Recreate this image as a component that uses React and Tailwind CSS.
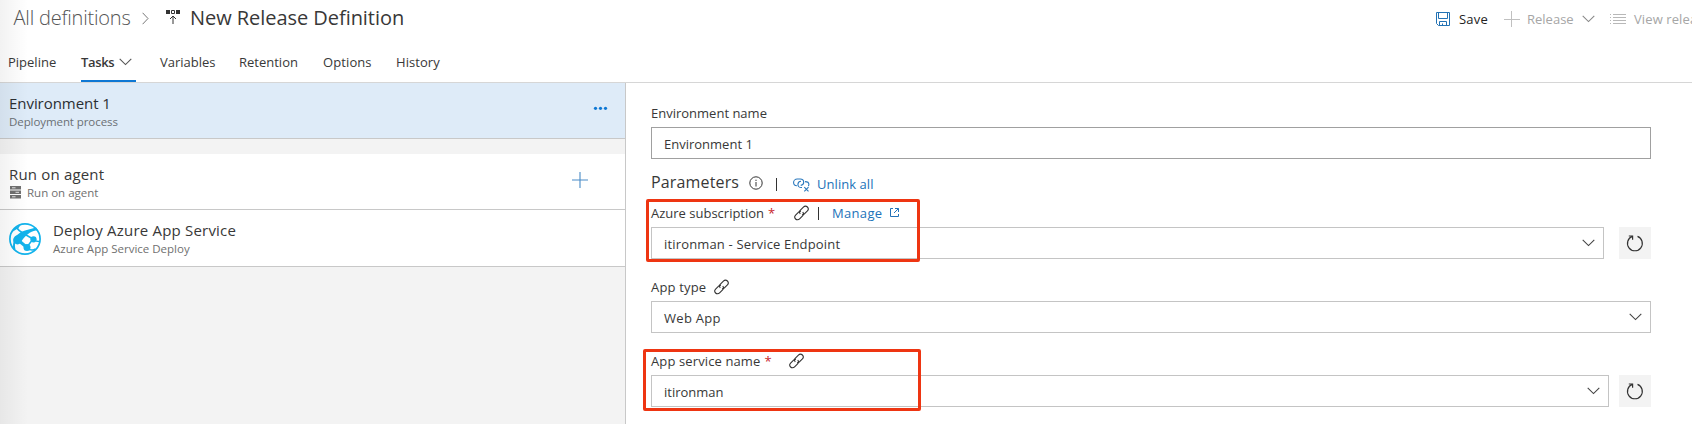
import React from "react";

function Chevron({ className = "" }) {
  return (
    <svg className={"shrink-0 " + className} width="13" height="8" viewBox="0 0 13 8" fill="none" stroke="currentColor" strokeWidth="1.1">
      <path d="M.7 .9 6.5 6.6 12.3 .9" />
    </svg>
  );
}

function LinkIcon({ className = "" }) {
  return (
    <svg className={"shrink-0 text-[#333] " + className} width="16" height="16" viewBox="0 0 16 16" fill="none" stroke="currentColor" strokeWidth="1.1">
      <path d="M6.300 8.800C5.300 7.700 5.400 6.200 6.400 5.200L9.400 2.100C10.600.9 12.300.9 13.400 2S14.500 4.700 13.400 5.900L10.400 8.900C9.700 9.600 8.800 9.800 8 9.600" />
      <path d="M8.700 7.200C9.700 8.300 9.600 9.800 8.600 10.800L5.600 13.900C4.400 15.100 2.700 15.100 1.600 14S.5 11.300 1.600 10.100L4.600 7.100C5.300 6.400 6.200 6.200 7 6.400" />
    </svg>
  );
}

function UnlinkIcon({ className = "" }) {
  return (
    <svg className={"shrink-0 text-[#2a78bd] " + className} width="17" height="14" viewBox="0 0 17 14" fill="none" stroke="currentColor" strokeWidth="1.1">
      <path d="M3.900 7.800C2 7.600.6 6.200.6 4.400S2.200 1 4.200 1H7.200C9.200 1 10.700 2.400 10.700 4.200 10.700 5.900 9.400 7.200 7.700 7.400" />
      <path d="M9 9.500H8.200C6.300 9.500 4.900 8.100 4.900 6.400S6.400 3.400 8 3.300" />
      <path d="M12 3.600C14.300 3.600 15.900 4.900 15.900 6.500 15.900 7.100 15.700 7.600 15.300 8" />
      <path d="M11.300 9.200 15.500 13.400M15.500 9.200 11.300 13.400" />
    </svg>
  );
}

function SaveIcon() {
  return (
    <svg className="mt-[12px] shrink-0 text-[#2272b4]" width="15" height="15" viewBox="0 0 15 15" fill="none" stroke="currentColor" strokeWidth="1">
      <path d="M.5.500H13.500V13.500H2.500L.5 11.500Z" />
      <path d="M2.500.500V6.500H11.500V.500" />
      <path d="M3.500 13.500V9.500H10.500V13.500M6.500 13.500V11.500" />
    </svg>
  );
}

function ReleaseIcon() {
  return (
    <svg className="mt-[10px] shrink-0" width="15" height="15" viewBox="0 0 15 15" fill="none" stroke="#333">
      <path d="M0 0H4V4H0ZM10 0H14V4H10Z" fill="#333" stroke="none" />
      <path d="M5.500.500H8.500V3.500H5.500Z" strokeWidth="1" />
      <path d="M7 6V14M4 9 7 6 10 9" strokeWidth="1" />
    </svg>
  );
}

function ServerIcon() {
  return (
    <svg className="mt-[2px] shrink-0" width="11" height="13" viewBox="0 0 11 13">
      <path d="M0 0H11V3.500H0ZM0 4.500H11V8H0ZM0 9H11V12.500H0Z" fill="#707070" />
      <path d="M2 1.800H5.500M5.500 6.300H9M2 10.800H5.500" stroke="#e4e4e4" strokeWidth="1" />
    </svg>
  );
}

function GlobeIcon() {
  return (
    <svg className="mt-[13px] shrink-0" width="32" height="32" viewBox="0 0 32 32" fill="none" stroke="#12b3ec">
      <circle cx="16" cy="16" r="15.100" strokeWidth="1.700" />
      <path d="M7.500 4.500C9 7 11.500 8.800 14.500 10.500L24 16" strokeWidth="1.600" />
      <path d="M6.500 17C4.800 20 4.500 23 5.500 26.500" strokeWidth="2" />
      <path d="M9 17 18 24.500" strokeWidth="3" />
      <path d="M24 16 18 24M24.500 16.500C27 18.300 29 18.800 31 18.500M18 25C21 27.300 24 27.500 26.500 26" strokeWidth="1.500" />
      <g fill="#12b3ec" stroke="none">
        <circle cx="8.500" cy="17" r="4.400" />
        <circle cx="18" cy="24.500" r="3.500" />
        <circle cx="24.500" cy="16.300" r="3.100" />
        <path d="M5.500 14 12 9 16 7.500 27 4.500 29 7.500C23 7.500 18.500 10 12.500 18Z" />
        <path d="M1 12C3 7 7 3.500 12 1.500L9.500 5 4 8.500Z" />
      </g>
    </svg>
  );
}

function Refresh() {
  return (
    <button className="flex h-8 w-8 shrink-0 items-center justify-center bg-[#f3f3f3]">
      <svg width="18" height="18" viewBox="0 0 18 18" fill="none" stroke="#333" strokeWidth="1.200">
        <path d="M11.500 2.400A7.400 7.400 0 1 1 6.300 2.400" />
        <path d="M2.800 2H6.600V5.800" />
      </svg>
    </button>
  );
}

function Select({ children, className = "" }) {
  return (
    <div className={"flex h-8 items-center justify-between border border-[#c4c4c4] bg-white pl-3 " + className}>
      <span className="mt-[2px] leading-5">{children}</span>
      <Chevron className="mr-[8px] text-[#444]" />
    </div>
  );
}

export default function App() {
  return (
    <div className="relative flex h-[424px] w-[1692px] flex-col overflow-hidden bg-white font-['Open_Sans',sans-serif] text-[13px] text-[#383838] whitespace-nowrap">
      <header className="flex h-[45px] shrink-0">
        <div className="flex w-[1436px] shrink-0 pl-[13.500px]">
          <span className="mt-[4px] w-[128px] text-[20px] leading-7 font-light tracking-[-0.200px] text-[#555]">All definitions</span>
          <svg className="mt-[12px] w-[24px] shrink-0" height="13" viewBox="0 0 24 13" fill="none" stroke="#777" strokeWidth="1">
            <path d="M.6.800 6 6.500.6 12.200" />
          </svg>
          <ReleaseIcon />
          <h1 className="mt-[4px] ml-[9.500px] text-[20px] leading-7 tracking-[-0.050px]">New Release Definition</h1>
        </div>
        <div className="flex shrink-0 leading-5">
          <SaveIcon />
          <span className="mt-[9px] ml-[8px] w-[45px] tracking-[0.200px] text-[#222]">Save</span>
          <svg className="mt-[11px] shrink-0" width="16" height="16" viewBox="0 0 16 16" stroke="#c0c0c0" strokeWidth="1">
            <path d="M0 8.500H16M7.500 0V16" />
          </svg>
          <span className="mt-[9px] ml-[7px] w-[55px] text-[#a6a6a6]">Release</span>
          <Chevron className="mt-[15px] text-[#888]" />
          <svg className="mt-[14px] ml-[15px] shrink-0" width="16" height="11" viewBox="0 0 16 11" stroke="#b8b8b8" strokeWidth="1">
            <path d="M0 .5H1M3 .5H16M0 3.500H1M3 3.500H16M0 6.500H1M3 6.500H16M0 9.500H1M3 9.500H16" />
          </svg>
          <span className="mt-[9px] ml-[8px] tracking-[0.100px] text-[#a6a6a6]">View releases</span>
        </div>
      </header>

      <nav className="flex h-[38px] shrink-0 border-b border-[#d6d6d6] pl-[8px] leading-5">
        <span className="mt-[7px] w-[73px]">Pipeline</span>
        <span className="flex w-[55px] border-b-2 border-[#0f78d4]">
          <span className="mt-[7px] w-[38px] font-semibold tracking-[-0.350px]">Tasks</span>
          <Chevron className="mt-[13px] text-[#555]" />
        </span>
        <span className="mt-[7px] ml-6 w-[79px]">Variables</span>
        <span className="mt-[7px] w-[84px]">Retention</span>
        <span className="mt-[7px] w-[73px] tracking-[0.100px]">Options</span>
        <span className="mt-[7px] tracking-[0.050px]">History</span>
      </nav>

      <div className="flex min-h-0 flex-1">
        <aside className="flex w-[626px] shrink-0 flex-col border-r border-[#c8c8c8] bg-[#f3f3f3]">
          <div className="flex h-[56px] shrink-0 justify-between border-b border-[#c8c8c8] bg-[#deebf8] pl-[9px]">
            <div className="flex flex-col pt-[10px]">
              <span className="text-[15px] leading-5 tracking-[-0.050px] text-[#2b2f33]">Environment 1</span>
              <span className="mt-px text-[11.500px] leading-4 tracking-[-0.080px] text-[#6b7075]">Deployment process</span>
            </div>
            <svg className="mt-[23px] mr-[17px]" width="15" height="5" viewBox="0 0 15 5" fill="#0f78d4">
              <circle cx="2.500" cy="2.300" r="1.600" />
              <circle cx="7.500" cy="2.300" r="1.600" />
              <circle cx="12.500" cy="2.300" r="1.600" />
            </svg>
          </div>
          <div className="mt-[15px] flex h-[56px] shrink-0 justify-between border-b border-[#c8c8c8] bg-white pl-[9px]">
            <div className="flex flex-col pt-[10px]">
              <span className="text-[15px] leading-5 tracking-[0.180px]">Run on agent</span>
              <span className="ml-px flex h-4 gap-[6px]">
                <ServerIcon />
                <span className="mt-px text-[11.500px] leading-4 text-[#707070]">Run on agent</span>
              </span>
            </div>
            <svg className="mt-[18px] mr-[37px]" width="16" height="16" viewBox="0 0 16 16" stroke="#4a8cc7" strokeWidth="1.100">
              <path d="M0 8H16M8 0V16" />
            </svg>
          </div>
          <div className="flex h-[57px] shrink-0 border-b border-[#c8c8c8] bg-white pl-[9px]">
            <GlobeIcon />
            <div className="ml-[12px] flex flex-col pt-[10px]">
              <span className="text-[15px] leading-5 tracking-[0.200px]">Deploy Azure App Service</span>
              <span className="mt-px text-[11.500px] leading-4 text-[#707070]">Azure App Service Deploy</span>
            </div>
          </div>
        </aside>

        <main className="flex min-w-0 flex-1 flex-col pl-[25px]">
          <label className="mt-[20px] h-6 leading-5">Environment name</label>
          <div className="flex h-8 w-[1000px] shrink-0 items-center border border-[#a0a0a0] pl-3">
            <span className="mt-[2px] leading-5">Environment 1</span>
          </div>

          <div className="flex h-[44px] shrink-0">
            <h2 className="mt-[11px] w-[98px] text-[16px] leading-6 tracking-[0.150px]">Parameters</h2>
            <svg className="mt-[17px] shrink-0" width="14" height="14" viewBox="0 0 14 14" fill="none" stroke="#333" strokeWidth="1">
              <circle cx="7" cy="7" r="6.200" />
              <path d="M7 6V10.500M7 3.700V5" />
            </svg>
            <span className="mt-[19px] ml-[13px] h-[13px] w-px bg-[#333]" />
            <UnlinkIcon className="mt-[19px] ml-[16px]" />
            <a className="mt-[15px] ml-[7px] leading-5 tracking-[0.050px] text-[#2272b9]">Unlink all</a>
          </div>

          <div className="flex h-[24px] shrink-0 leading-5">
            <label>Azure subscription</label>
            <span className="ml-[4px] w-[26px] text-[#c8242b]">*</span>
            <LinkIcon className="mt-[2px]" />
            <span className="mt-[4px] ml-[8px] h-[13px] w-px bg-[#333]" />
            <a className="ml-[13px] w-[58px] tracking-[0.300px] text-[#2272b9]">Manage</a>
            <svg className="mt-[5px]" width="10" height="10" viewBox="0 0 10 10" fill="none" stroke="#2272b9" strokeWidth="1">
              <path d="M3 .500H.5V8.500H8.500V6M5 .500H8.500V4M8.500.500 4 5" />
            </svg>
          </div>
          <div className="flex h-8 shrink-0 gap-[15px]">
            <Select className="w-[953px] tracking-[0.160px]">itironman - Service Endpoint</Select>
            <Refresh />
          </div>

          <div className="mt-[18px] flex h-[24px] shrink-0 leading-5">
            <label className="mr-[8px] tracking-[0.180px]">App type</label>
            <LinkIcon className="mt-[2px]" />
          </div>
          <Select className="w-[1000px] shrink-0 tracking-[0.300px]">Web App</Select>

          <div className="mt-[18px] flex h-[24px] shrink-0 leading-5">
            <label className="tracking-[0.120px]">App service name</label>
            <span className="ml-[4px] w-[25px] text-[#c8242b]">*</span>
            <LinkIcon className="mt-[2px]" />
          </div>
          <div className="flex h-8 shrink-0 gap-[10px]">
            <Select className="w-[958px]">itironman</Select>
            <Refresh />
          </div>
        </main>
      </div>

      <div className="absolute top-0 left-0 h-full w-[28px] bg-linear-to-r from-black/5 to-transparent" />
      <div className="absolute top-[199px] left-[646px] h-[63px] w-[274px] rounded-[2px] border-3 border-[#ee3512]" />
      <div className="absolute top-[349px] left-[643px] h-[62px] w-[278px] rounded-[2px] border-3 border-[#ee3512]" />
    </div>
  );
}
